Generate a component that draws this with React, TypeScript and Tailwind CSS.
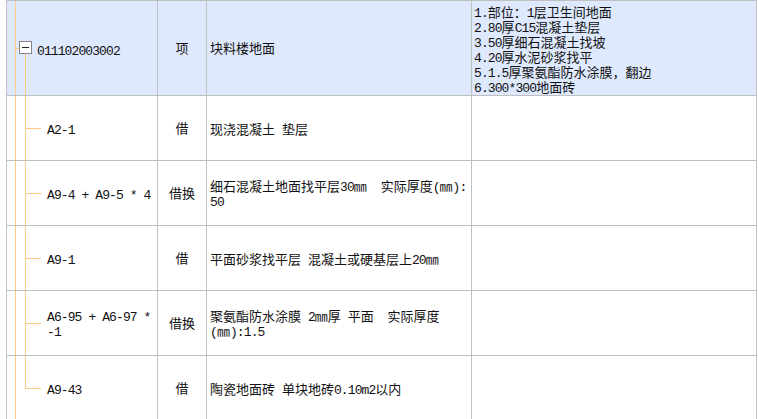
import React from 'react'

type Row = { code: string[]; type: string; desc: string[]; last?: boolean }

const rows: Row[] = [
  { code: ['A2-1'], type: '借', desc: ['现浇混凝土 垫层'] },
  { code: ['A9-4 + A9-5 * 4'], type: '借换', desc: ['细石混凝土地面找平层30㎜  实际厚度(㎜):', '50'] },
  { code: ['A9-1'], type: '借', desc: ['平面砂浆找平层 混凝土或硬基层上20㎜'] },
  { code: ['A6-95 + A6-97 *', '-1'], type: '借换', desc: ['聚氨酯防水涂膜 2㎜厚 平面  实际厚度', '(㎜):1.5'] },
  { code: ['A9-43'], type: '借', desc: ['陶瓷地面砖 单块地砖0.10m2以内'], last: true },
]

const features = [
  '1.部位：1层卫生间地面',
  '2.80厚C15混凝土垫层',
  '3.50厚细石混凝土找坡',
  '4.20厚水泥砂浆找平',
  '5.1.5厚聚氨酯防水涂膜，翻边',
  '6.300*300地面砖',
]

// latin runs in a narrow mono face, CJK in Noto
function Mixed({ text }: { text: string }) {
  const parts = text.split(/([\x20-\x7e]+)/).filter(Boolean)
  return (
    <>
      {parts.map((p, i) =>
        /^[\x20-\x7e]+$/.test(p) ? (
          <span key={i} className="font-['Liberation_Mono',monospace] text-[13px] tracking-[-0.9px] leading-[15px]">{p}</span>
        ) : (
          <span key={i} className="leading-[15px]">{p}</span>
        )
      )}
    </>
  )
}

function Lines({ lines }: { lines: string[] }) {
  return (
    <div className="whitespace-pre">
      {lines.map((l, i) => (
        <div key={i} className="h-[15px] leading-[15px]"><Mixed text={l} /></div>
      ))}
    </div>
  )
}

export default function App() {
  return (
    <div className="w-[758px] h-[419px] overflow-hidden bg-white flex text-[13px] text-[#111] font-['Noto_Sans_CJK_SC',sans-serif]">
      <div className="w-[6px] shrink-0" />
      <div className="w-[751px] shrink-0 border-l border-t border-[#c0c0c0]">
        {/* header / parent item */}
        <div className="flex h-[95px] border-b border-[#c0c0c0] bg-[#dfe9fd]">
          <div className="relative w-[151px] shrink-0 border-r border-[#c0c0c0] flex items-center pl-[30px] pt-[2px]">
            <div className="absolute left-[8px] top-0 bottom-0 w-px bg-[#ffcb84]" />
            <div className="absolute left-[8px] top-[47px] w-[4px] h-px bg-[#ffcb84]" />
            <div className="absolute left-[18px] top-[53px] bottom-0 w-px bg-[#ffcb84]" />
            <div className="absolute left-[12px] top-[40px] w-[13px] h-[13px] border border-[#858585] bg-white flex items-center justify-center">
              <div className="w-[7px] h-px bg-[#222]" />
            </div>
            <Lines lines={['011102003002']} />
          </div>
          <div className="w-[49px] shrink-0 border-r border-[#c0c0c0] flex items-center justify-center">项</div>
          <div className="w-[265px] shrink-0 border-r border-[#c0c0c0] flex items-center pl-[3px]">块料楼地面</div>
          <div className="w-[285px] shrink-0 border-r border-[#c0c0c0] flex items-center pl-[2px] pt-[2px]">
            <Lines lines={features} />
          </div>
        </div>

        {rows.map((r, i) => (
          <div key={i} className="flex h-[65px] border-b border-[#c0c0c0]">
            <div className="relative w-[151px] shrink-0 border-r border-[#c0c0c0] flex items-center pl-[40px]">
              <div className="absolute left-[8px] top-0 bottom-0 w-px bg-[#ffcb84]" />
              <div className={`absolute left-[18px] top-0 w-px bg-[#ffcb84] ${r.last ? 'h-1/2' : 'bottom-0'}`} />
              <div className="absolute left-[18px] top-1/2 w-[16px] h-px bg-[#ffcb84]" />
              <Lines lines={r.code} />
            </div>
            <div className="w-[49px] shrink-0 border-r border-[#c0c0c0] flex items-center justify-center">{r.type}</div>
            <div className="w-[265px] shrink-0 border-r border-[#c0c0c0] flex items-center pl-[3px]">
              <Lines lines={r.desc} />
            </div>
            <div className="w-[285px] shrink-0 border-r border-[#c0c0c0]" />
          </div>
        ))}
      </div>
    </div>
  )
}
